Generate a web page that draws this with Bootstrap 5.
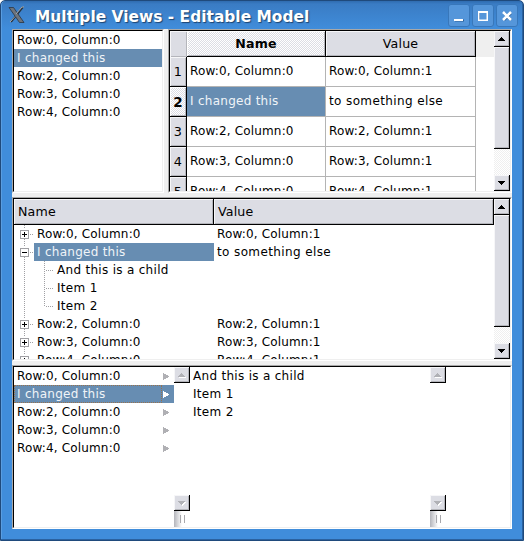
<!DOCTYPE html>
<html lang="en">
<head>
<meta charset="utf-8">
<title>Multiple Views - Editable Model</title>
<link rel="stylesheet" href="https://cdn.jsdelivr.net/npm/bootstrap@5.3.0/dist/css/bootstrap.min.css">
<style>
body{width:524px;height:541px;font:12px/18px "DejaVu Sans",sans-serif;letter-spacing:.16px;color:#000;background:#fff}
svg{display:block;flex:none}
.win{width:524px;height:541px;border:1px solid #1f4a7c;border-radius:5px 5px 0 0;background:linear-gradient(#2f6cb0,#3a7cc4 3px,#408ddb 28px,#408ddb);box-shadow:inset -1px -1px #2b62a0,inset 1px 0 #5a9de0;padding:0 11px 11px}
.titlebar{height:28px;margin-left:-5px;margin-right:-6px}
.title{font-size:15.4px;font-weight:bold;letter-spacing:.03px;line-height:28px;color:#fff;text-shadow:1px 1px 1px #1d4470;margin-left:9px;margin-top:2px;white-space:nowrap}
.wbtns{column-gap:2px;padding-top:2px}
.wbtn{width:22px;height:23px;border:1px solid #3877ba;border-radius:3px;background:#5596da;margin-top:1px;display:flex;align-items:center;justify-content:center}
.client{width:500px;height:500px;background:#efefef;display:grid;grid-template-rows:164px 4px 164px 4px 164px}
.top{display:grid;grid-template-columns:152px 4px 344px}
.pane{border-style:solid;border-width:1px;border-color:#a8a8a8 #fff #fff #a8a8a8;min-width:0;overflow:hidden}
.inner{height:100%;border-style:solid;border-width:1px;border-color:#000 #efefef #efefef #000;background:#fff;overflow:hidden;display:flex}
.r{height:18px;line-height:18px;white-space:nowrap;padding-left:3px}
.w2{letter-spacing:.27px}
.w3{letter-spacing:.3px}
.w4{letter-spacing:.38px}
.sel{background:#678db2;color:#f0f4f8}
.raised{background:#dcdde4;box-shadow:inset 1px 1px #f6f6f8,inset -1px -1px #b4b5bb}
.dither{background:repeating-conic-gradient(#dcdde4 0 25%,#fff 0 50%) 0 0/2px 2px;box-shadow:inset 1px 1px #fff,inset -1px -1px #b4b5bb}
.sb{width:16px;flex:none;display:flex;flex-direction:column}
.sbtn{width:16px;height:16px;border-right:1px solid #000;border-bottom:1px solid #000;flex:none;padding:6px 0 0 4px}
.thumb{border-right:1px solid #000;border-bottom:1px solid #000;flex:none}
.thumb.a{height:102px}
.thumb.b{height:112px}
.trough{background:repeating-conic-gradient(#efefef 0 25%,#fff 0 50%) 0 0/2px 2px}
.tgrid{display:grid;grid-template-columns:17px 139px 150px;grid-template-rows:26px repeat(5,30px);width:306px;height:160px;overflow:hidden;flex:none}
.tgrid>div{white-space:nowrap;overflow:hidden}
.hd{border-right:1px solid #000;border-bottom:1px solid #000;text-align:center;line-height:26px;font-size:12.600px}
.cn{width:17px;height:26px}
.vh{border-right:1px solid #000;border-bottom:1px solid #000;text-align:center;line-height:30px;font-size:12.800px}
.vh.fw-bold{font-size:13.500px}
.cell{border-right:1px solid #b4b4b4;border-bottom:1px solid #b4b4b4;line-height:29px;padding-left:3px}
.filler{height:26px;background:#efefef}
.tree{width:480px;flex:none;overflow:hidden}
.th2{height:26px;line-height:26px;border-right:1px solid #000;border-bottom:1px solid #000;padding-left:4px;font-size:12.600px}
.c1{width:200px}
.c2{width:280px}
.trow{display:grid;grid-template-columns:20px 180px 280px;height:18px}
.trow.kid{grid-template-columns:40px 160px 280px}
.grip{width:16px;height:16px;background:linear-gradient(90deg,#b4b5bb,#fff 8px)}
.col1{width:160px;flex:none}
.col2{width:240px;flex:none}
.item{display:flex;align-items:center;justify-content:space-between;padding-right:4px}
.item.sel{position:relative}
.item.sel::before{content:"";position:absolute;left:0;top:0;width:148px;height:18px;border:1px dotted #98724d}
</style>
<script src="https://cdn.jsdelivr.net/npm/bootstrap@5.3.0/dist/js/bootstrap.bundle.min.js"></script>
</head>
<body class="m-0 overflow-hidden">
<svg width="0" height="0" class="position-absolute" shape-rendering="crispEdges">
<defs>
<g id="up"><path d="M3 0h1v1h1v1h1v1h1v1H0V3h1V2h1V1h1z"/></g>
<g id="dn"><path d="M0 0h7v1H6v1H5v1H4v1H3V3H2V2H1V1H0z"/></g>
<g id="rt"><path d="M0 0h1v1h2v1h2v1h1v1H5v1H3v1H1v1H0z"/></g>
<g id="box"><path d="M10 0v4M10 14v4" stroke="#a0a0a4" stroke-dasharray="1 1" transform="translate(.5 0)"/><path d="M16 9.5h4" stroke="#a0a0a4" stroke-dasharray="1 1"/><rect x="6.5" y="5.5" width="8" height="8" fill="#fff" stroke="#a0a0a4"/><path d="M8 9.5h5" stroke="#000"/></g>
</defs></svg>
<main class="win overflow-hidden">
 <header class="titlebar d-flex align-items-start">
  <svg width="19" height="20" viewBox="0 0 19 20" class="mt-1"><path d="M16 2L4 17" stroke="#26323f" stroke-width="2"/><path d="M2 2.500h4.500L17 17.500h-4.500z" fill="#6d747c" stroke="#2b3542" stroke-width=".8"/><path d="M17 2h-2L9 9M3 17L8 11.500" stroke="#a5a7aa" fill="none"/></svg>
  <div class="title">Multiple Views - Editable Model</div>
  <div class="d-flex ms-auto wbtns">
   <div class="wbtn"><svg width="12" height="12"><path d="M2 10.500h9" stroke="#2d5f96" stroke-width="2"/><path d="M1 10h9" stroke="#fff" stroke-width="2"/></svg></div>
   <div class="wbtn"><svg width="12" height="12"><rect x="2.500" y="2.500" width="8" height="8" fill="none" stroke="#2d5f96"/><path d="M1 1h10v10H1zM2.500 3v6.500h7V3z" fill="#fff" fill-rule="evenodd"/></svg></div>
   <div class="wbtn"><svg width="12" height="12"><path d="M3 3l7 7m0-7l-7 7" stroke="#2d5f96" stroke-width="2.500"/><path d="M2 2l8 8m0-8l-8 8" stroke="#fff" stroke-width="2.500"/></svg></div>
  </div>
 </header>
 <section class="client">
  <div class="top">
   <div class="pane"><div class="inner"><div class="w-100">
    <div class="r">Row:0, Column:0</div><div class="r sel w2">I changed this</div><div class="r">Row:2, Column:0</div><div class="r">Row:3, Column:0</div><div class="r">Row:4, Column:0</div>
   </div></div></div>
   <div></div>
   <div class="pane"><div class="inner">
    <div class="tgrid">
     <div class="raised cn"></div><div class="dither hd fw-bold">Name</div><div class="raised hd">Value</div>
     <div class="vh raised">1</div><div class="cell">Row:0, Column:0</div><div class="cell">Row:0, Column:1</div>
     <div class="vh dither fw-bold">2</div><div class="cell sel w2">I changed this</div><div class="cell w4">to something else</div>
     <div class="vh raised">3</div><div class="cell">Row:2, Column:0</div><div class="cell">Row:2, Column:1</div>
     <div class="vh raised">4</div><div class="cell">Row:3, Column:0</div><div class="cell">Row:3, Column:1</div>
     <div class="vh raised">5</div><div class="cell">Row:4, Column:0</div><div class="cell">Row:4, Column:1</div>
    </div>
    <div class="flex-fill filler"></div>
    <div class="sb"><div class="sbtn raised"><svg width="7" height="4"><use href="#up"/></svg></div><div class="thumb a raised"></div><div class="flex-fill trough"></div><div class="sbtn raised"><svg width="7" height="4"><use href="#dn"/></svg></div></div>
   </div></div>
  </div>
  <div></div>
  <div class="pane"><div class="inner">
   <div class="tree">
    <div class="d-flex"><div class="th2 raised c1">Name</div><div class="th2 raised c2">Value</div></div>
    <div class="trow"><svg width="20" height="18"><use href="#box"/><path d="M10.500 7v5" stroke="#000"/></svg><div class="r">Row:0, Column:0</div><div class="r">Row:0, Column:1</div></div>
    <div class="trow"><svg width="20" height="18"><use href="#box"/></svg><div class="r sel w2">I changed this</div><div class="r w4">to something else</div></div>
    <div class="trow kid"><svg width="40" height="18"><path d="M10.500 0v18M30.500 0v18M32 9.500h8" stroke="#a0a0a4" stroke-dasharray="1 1"/></svg><div class="r w3">And this is a child</div></div>
    <div class="trow kid"><svg width="40" height="18"><path d="M10.500 0v18M30.500 0v18M32 9.500h8" stroke="#a0a0a4" stroke-dasharray="1 1"/></svg><div class="r w3">Item 1</div></div>
    <div class="trow kid"><svg width="40" height="18"><path d="M10.500 0v18M30.500 0v10M32 9.500h8" stroke="#a0a0a4" stroke-dasharray="1 1"/></svg><div class="r w3">Item 2</div></div>
    <div class="trow"><svg width="20" height="18"><use href="#box"/><path d="M10.500 7v5" stroke="#000"/></svg><div class="r">Row:2, Column:0</div><div class="r">Row:2, Column:1</div></div>
    <div class="trow"><svg width="20" height="18"><use href="#box"/><path d="M10.500 7v5" stroke="#000"/></svg><div class="r">Row:3, Column:0</div><div class="r">Row:3, Column:1</div></div>
    <div class="trow"><svg width="20" height="18"><use href="#box"/><path d="M10.500 7v5" stroke="#000"/></svg><div class="r">Row:4, Column:0</div><div class="r">Row:4, Column:1</div></div>
   </div>
   <div class="sb"><div class="sbtn raised"><svg width="7" height="4"><use href="#up"/></svg></div><div class="thumb b raised"></div><div class="flex-fill trough"></div><div class="sbtn raised"><svg width="7" height="4"><use href="#dn"/></svg></div></div>
  </div></div>
  <div></div>
  <div class="pane"><div class="inner">
   <div class="col1">
    <div class="r item">Row:0, Column:0<svg width="7" height="7" fill="#b0b0b4"><use href="#rt"/></svg></div>
    <div class="r item sel w2">I changed this<svg width="7" height="7" fill="#fff"><use href="#rt"/></svg></div>
    <div class="r item">Row:2, Column:0<svg width="7" height="7" fill="#b0b0b4"><use href="#rt"/></svg></div>
    <div class="r item">Row:3, Column:0<svg width="7" height="7" fill="#b0b0b4"><use href="#rt"/></svg></div>
    <div class="r item">Row:4, Column:0<svg width="7" height="7" fill="#b0b0b4"><use href="#rt"/></svg></div>
   </div>
   <div class="sb"><div class="sbtn raised"><svg width="8" height="5"><use href="#up" x="1" y="1" fill="#fff"/><use href="#up" fill="#b0b1b6"/></svg></div><div class="flex-fill"></div><div class="sbtn raised"><svg width="8" height="5"><use href="#dn" x="1" y="1" fill="#fff"/><use href="#dn" fill="#b0b1b6"/></svg></div><div class="grip"><svg width="16" height="16"><path d="M6.500 4v8M10.500 4v8" stroke="#a8a8ac"/></svg></div></div>
   <div class="col2"><div class="r w3">And this is a child</div><div class="r w3">Item 1</div><div class="r w3">Item 2</div></div>
   <div class="sb"><div class="sbtn raised"><svg width="8" height="5"><use href="#up" x="1" y="1" fill="#fff"/><use href="#up" fill="#b0b1b6"/></svg></div><div class="flex-fill"></div><div class="sbtn raised"><svg width="8" height="5"><use href="#dn" x="1" y="1" fill="#fff"/><use href="#dn" fill="#b0b1b6"/></svg></div><div class="grip"><svg width="16" height="16"><path d="M6.500 4v8M10.500 4v8" stroke="#a8a8ac"/></svg></div></div>
  </div></div>
 </section>
</main>
</body>
</html>
